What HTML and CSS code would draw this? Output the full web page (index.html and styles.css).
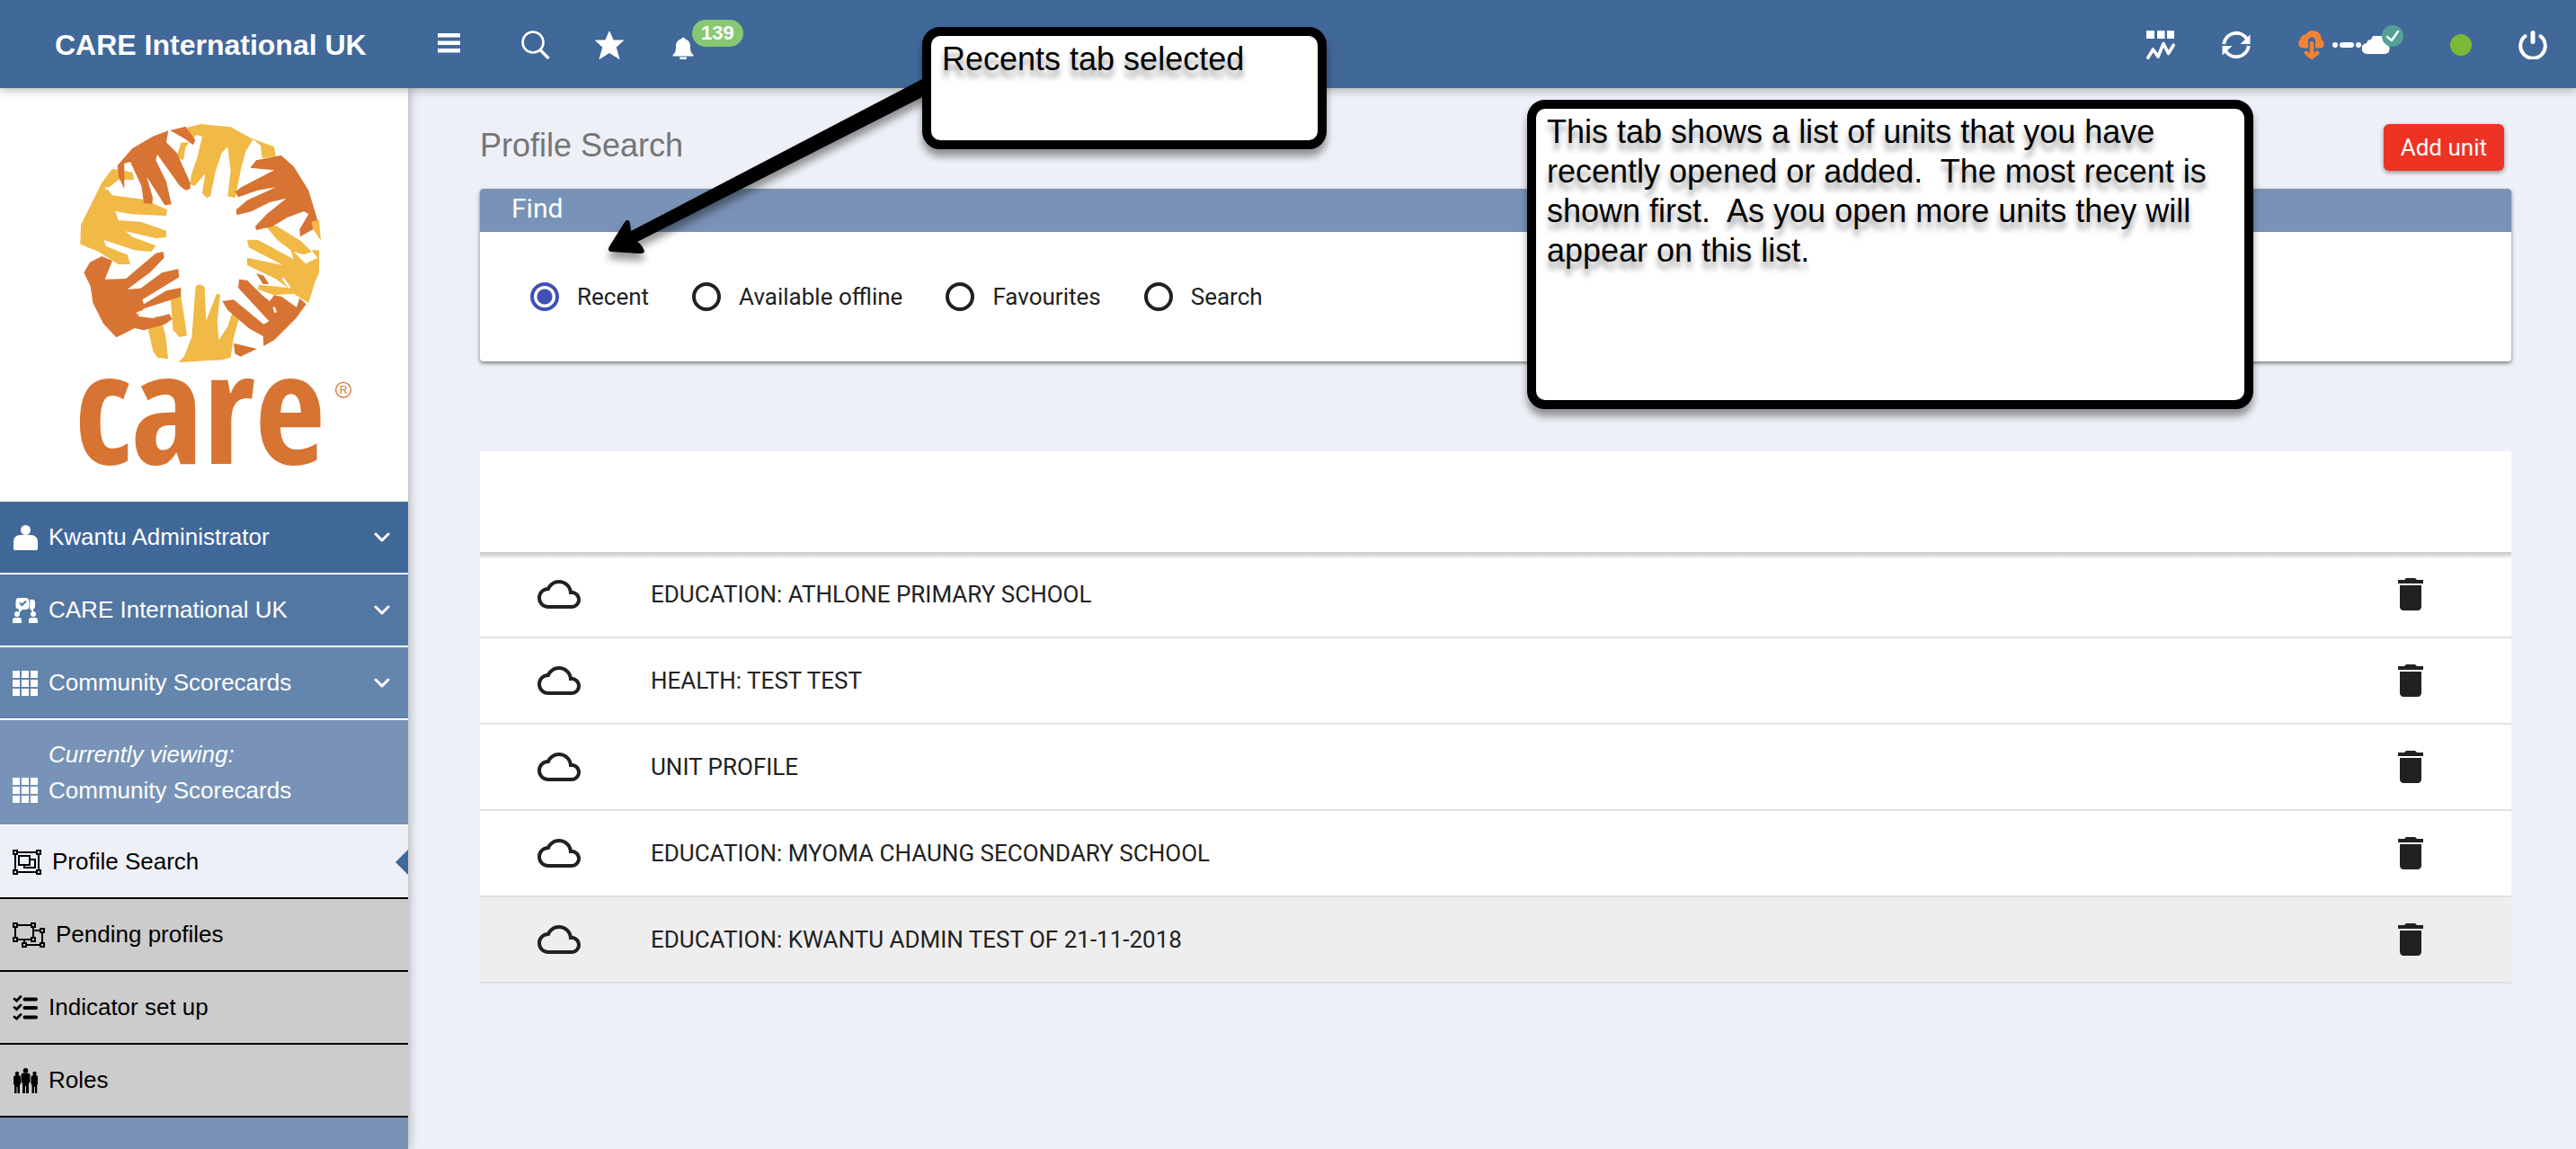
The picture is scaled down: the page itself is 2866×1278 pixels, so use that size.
FILE: index.html
```html
<!DOCTYPE html>
<html lang="en">

<head>
    <meta charset="UTF-8" />
    <meta name="viewport" content="width=device-width, initial-scale=1.0" />
    <title>Profile Search</title>
    <link rel="stylesheet" href="styles.css">
</head>

<body>
    <!-- shared icons -->
    <svg class="sprite" aria-hidden="true">
        <symbol id="icon-grid" viewBox="0 0 28 28">
            <path d="M0 0h8v8H0zM10 0h8v8h-8zM20 0h8v8h-8zM0 10h8v8H0zM10 10h8v8h-8zM20 10h8v8h-8zM0 20h8v8H0zM10 20h8v8h-8zM20 20h8v8h-8z" fill="currentColor" />
        </symbol>
        <symbol id="icon-chevron" viewBox="0 0 18 12">
            <path d="M2 2l7 7 7-7" fill="none" stroke="currentColor" stroke-width="3" stroke-linecap="round" stroke-linejoin="round" />
        </symbol>
        <symbol id="icon-cloud" viewBox="0 0 24 24">
            <path d="M19.35 10.04C18.67 6.59 15.64 4 12 4 9.11 4 6.6 5.64 5.35 8.04 2.34 8.36 0 10.91 0 14c0 3.31 2.69 6 6 6h13c2.76 0 5-2.24 5-5 0-2.64-2.05-4.78-4.65-4.96zM19 18H6c-2.21 0-4-1.79-4-4s1.79-4 4-4h.71C7.37 7.69 9.48 6 12 6c3.04 0 5.5 2.46 5.5 5.5v.5H19c1.66 0 3 1.34 3 3s-1.34 3-3 3z" fill="currentColor" />
        </symbol>
        <symbol id="icon-delete" viewBox="0 0 24 24">
            <path d="M6 19c0 1.100.9 2 2 2h8c1.100 0 2-.9 2-2V7H6v12zM19 4h-3.500l-1-1h-5l-1 1H5v2h14V4z" fill="currentColor" />
        </symbol>
        <symbol id="icon-solid-cloud" viewBox="0 0 32 20">
            <path d="M6 20a6 6 0 0 1-1-12 5 5 0 0 1 5-4A8.500 8.500 0 0 1 26.500 8.500 6 6 0 0 1 26 20z" fill="currentColor" />
        </symbol>
    </svg>

    <header class="topbar">
        <a class="brand" href="#">CARE International UK</a>
        <div class="tools">
            <button class="icon-btn menu-btn" aria-label="Menu">
                <svg viewBox="0 0 32 32"><path d="M4 3h25v4.500H4zM4 11.500h25V16H4zM4 20h25v4.500H4z" fill="currentColor" /></svg>
            </button>
            <button class="icon-btn" aria-label="Search">
                <svg viewBox="0 0 32 32" fill="none" stroke="currentColor"><circle cx="13" cy="13" r="11.500" stroke-width="2.600" /><path d="M21 21.500l9.500 9.500" stroke-width="3.400" /></svg>
            </button>
            <button class="icon-btn" aria-label="Favourites">
                <svg viewBox="0 0 32 32"><path d="M16 1l4.300 10H31.500l-8.300 7.600L27 31.500 16 24.500 5 31.500l3.800-12.900L.5 11h11.200z" fill="currentColor" stroke="currentColor" stroke-linejoin="round" /></svg>
            </button>
            <button class="icon-btn" aria-label="Notifications">
                <svg viewBox="0 0 32 32"><path d="M16 7.500c1 0 1.800.8 1.800 1.800 4 1 6.200 4 6.200 8.200 0 5 .8 7.500 3.500 9.500v1.500h-23V27C7.200 25 8 22.500 8 17.500c0-4.200 2.200-7.200 6.200-8.200 0-1 .8-1.800 1.800-1.800zM12 29.500h8a4 4 0 0 1-8 0z" fill="currentColor" /></svg>
                <span class="badge">139</span>
            </button>
        </div>
        <div class="status">
            <button class="icon-btn" aria-label="Reports">
                <svg viewBox="0 0 32 32"><path d="M0 0h9v9H0zM12 0h8.500v9H12zM23 0h8v9h-8z" fill="currentColor" /><path d="M1 31.500l6.500-10.500 5.500 8 6-14.500 5.500 11L31 15" fill="none" stroke="currentColor" stroke-width="3.600" stroke-linejoin="round" /></svg>
            </button>
            <button class="icon-btn" aria-label="Refresh">
                <svg viewBox="0 0 32 32"><path d="M2.200 15A14 14 0 0 1 28 9.500M29.800 17A14 14 0 0 1 4 22.500" fill="none" stroke="currentColor" stroke-width="4" /><path d="M31.500 4.500V15H20.500zM.5 27.500V17h11z" fill="currentColor" /></svg>
            </button>
            <div class="sync">
                <svg class="sync-down" viewBox="0 0 32 32"><path d="M6 19.500A5.500 5.500 0 0 1 3.500 9.500 5 5 0 0 1 9 4.500C14-3 25 0 26.500 7c.5 2-.2 2.500 1 3.500A5.300 5.300 0 0 1 27 19.500z" fill="#ee8336" /><path d="M16 11.500v17" fill="none" stroke="#406899" stroke-width="8" stroke-linecap="round" /><path d="M16 14v15M10 25l6 4.800 6-4.800" fill="none" stroke="#ee8336" stroke-width="4.600" stroke-linecap="round" stroke-linejoin="round" /></svg>
                <svg class="sync-link" viewBox="0 0 34 6"><circle cx="4" cy="3" r="3" fill="#fff" /><rect x="9" width="16" height="6" rx="3" fill="#fff" /><circle cx="30" cy="3" r="3" fill="#fff" /></svg>
                <svg class="sync-cloud"><use href="#icon-solid-cloud" /></svg>
                <svg class="sync-ok" viewBox="0 0 24 24"><circle cx="12" cy="12" r="12" fill="#52a096" /><path d="M6 13l5 4 7-10" fill="none" stroke="#fff" stroke-width="2.500" stroke-linecap="round" stroke-linejoin="round" /></svg>
            </div>
            <span class="online"></span>
            <button class="icon-btn" aria-label="Log out">
                <svg viewBox="0 0 32 32" fill="none" stroke="currentColor" stroke-width="4" stroke-linecap="round"><path d="M7.500 6.200a13.800 13.800 0 1 0 17 0" /><path d="M16 2.500v10" stroke-width="5" /></svg>
            </button>
        </div>
    </header>

    <div class="layout">
        <aside class="sidebar">
            <div class="logo">
                <svg viewBox="0 0 1080 1260" role="img" aria-label="care">
                    <!-- ring of hands -->
                    <g fill="#f1b945">
                        <path d="M445 65L490 54 590 64 655 100 735 130 740 162 695 168 690 125 665 105 640 145 625 200 605 300 580 295 590 210 580 130 560 150 540 210 522 295 510 300 495 285 505 220 470 260 455 255 458 225 480 160 495 95 475 90 440 130 432 175 408 165 425 115 465 118z" />
                        <path d="M195 203L262 215 268 240 215 240 178 270 195 292 300 305 378 340 375 360 260 355 205 345 215 375 290 380 375 410 375 432 340 435 240 412 260 430 340 460 325 480 270 475 165 440 175 462 245 490 255 522 215 522 150 480 88 455 90 390 125 320 160 250z" />
                        <path d="M700 385L745 395 825 445 860 480 835 490 800 480 840 520 880 500 860 475 885 475 885 550 872 580 850 650 800 620 735 625 680 605 685 590 780 600 740 570 645 525 645 500 740 520 765 525 650 465 645 440 680 440 800 505 790 475 745 440z" />
                        <path d="M865 375h20l6 68-35-52z" />
                        <path d="M390 640l34-10 10 60 10 70-25 5-22-25zM315 740l25-45 15 5 18 60 8 78-35-5-15-20zM473 595l14-6 16 8 5 113 35-90 12 3-10 90 5 62 30-45 15-45 25 10-20 70-10 68-30 8-145 8 20-20 25-65z" />
                    </g>
                    <g fill="#d77433">
                        <path d="M212 192L262 135 330 95 382 76 375 115 410 150 455 250 455 270 440 275 420 260 345 155 340 175 375 245 392 322 370 325 345 285 310 230 330 300 328 320 300 318 292 260 255 180 235 185 235 270 216 230z" />
                        <path d="M388 75L440 62 472 108 465 124 440 105z" />
                        <path d="M655 200L675 175 758 158 800 195 850 275 880 375 860 380 865 405 822 430 820 405 850 355 835 345 780 365 730 395 675 408 672 395 710 355 775 302 720 315 660 345 610 358 608 340 645 308 740 265 680 275 615 298 605 280 625 265 735 208z" />
                        <path d="M160 495L195 510 170 572 240 570 340 485 365 480 368 500 320 550 245 605 290 602 360 550 415 537 418 565 295 640 300 655 375 610 424 600 424 630 300 670 280 695 330 702 385 688 395 705 370 722 300 742 270 735 208 766 165 720 130 650 122 595 100 550 120 515z" />
                        <path d="M562 645L600 640 700 722 718 712 615 600 618 572 645 575 695 625 720 645 735 625 760 630 810 665 820 635 842 655 810 700 770 740 735 775 700 795 698 762 650 735 580 675z" />
                        <path d="M600 785L678 804 622 830 604 820zM675 552l25 8 18 28-20 0z" />
                    </g>
                    <!-- finger gaps -->
                    <path d="M280 685l105-35M175 268l70 15M765 570l20 28M735 668l4 12" stroke="#fff" stroke-width="8" stroke-linecap="round" />
                    <text class="logo-word" x="68" y="1187">care</text>
                    <circle cx="966" cy="941" r="25" fill="none" stroke="#d77433" stroke-width="4" />
                    <text class="logo-mark" x="966" y="954" text-anchor="middle">R</text>
                </svg>
            </div>

            <nav>
                <a class="nav-item level-1" href="#">
                    <svg class="nav-icon" viewBox="0 0 28 28"><circle cx="14.500" cy="5.500" r="5.500" fill="currentColor" /><path d="M1 26v-7c0-5 3-8 8-8h11c5 0 8 3 8 8v7c0 1.500-.5 2-2 2H3c-1.500 0-2-.5-2-2z" fill="currentColor" /></svg>
                    Kwantu Administrator
                    <svg class="chevron"><use href="#icon-chevron" /></svg>
                </a>
                <a class="nav-item level-2" href="#">
                    <svg class="nav-icon" viewBox="0 0 28 28"><path d="M7 0h7c3 0 4.500 1.500 4.500 4.500v4c0 3-1.500 4.500-4.500 4.500h-3l-4 4v-4.200C4.500 12.500 3.500 11 3.500 8.500v-4C3.500 1.500 4.500 0 7 0z" fill="currentColor" /><path d="M19.500 2c4-1 5.500.5 5.500 3v4c0 2-.5 3-2 3.500V16l-4-4z" fill="currentColor" /><path d="M8 5.500L10.500 8 15 3.500" fill="none" stroke="#5377a3" stroke-width="2" /><circle cx="5" cy="18" r="3" fill="currentColor" /><circle cx="23" cy="18" r="3" fill="currentColor" /><path d="M0 28v-3c0-2 1-3 3-3h4c2 0 3 1 3 3v3zM18 28v-3c0-2 1-3 3-3h4c2 0 3 1 3 3v3z" fill="currentColor" /></svg>
                    CARE International UK
                    <svg class="chevron"><use href="#icon-chevron" /></svg>
                </a>
                <a class="nav-item level-3" href="#">
                    <svg class="nav-icon"><use href="#icon-grid" /></svg>
                    Community Scorecards
                    <svg class="chevron"><use href="#icon-chevron" /></svg>
                </a>
                <div class="current">
                    <em>Currently viewing:</em>
                    <svg class="nav-icon"><use href="#icon-grid" /></svg>
                    <span>Community Scorecards</span>
                </div>
                <a class="nav-item page active" href="#">
                    <svg class="nav-icon wide" viewBox="0 0 32 28" fill="none" stroke="currentColor" stroke-width="2"><path d="M6 3h20M6 25h20M3 6v16M29 6v16M1 1h4v4H1zM27 1h4v4h-4zM1 23h4v4H1zM27 23h4v4h-4zM7 7h12v10H7zM19 11h6v9H13v-3" /></svg>
                    Profile Search
                </a>
                <a class="nav-item page" href="#">
                    <svg class="nav-icon wider" viewBox="0 0 36 28" fill="none" stroke="currentColor" stroke-width="2"><path d="M6 3h14M6 19h14M3 6v10M23 6v10M1 1h4v4H1zM21 1h4v4h-4zM1 17h4v4H1zM21 17h4v4h-4zM24 9h6M33 12v10M16 25h14M13 20v2M31 7h4v4h-4zM31 23h4v4h-4zM11 23h4v4h-4z" /></svg>
                    Pending profiles
                </a>
                <a class="nav-item page" href="#">
                    <svg class="nav-icon" viewBox="0 0 28 28" fill="none" stroke="currentColor" stroke-linecap="round"><path d="M13.500 4.500H26M13.500 14H26M13.500 24.500H26" stroke-width="4" /><path d="M2 4l2.500 2L9 1.500M2 13.500l2.500 2L9 11M2 24l2.500 2L9 21.500" stroke-width="2.800" /></svg>
                    Indicator set up
                </a>
                <a class="nav-item page" href="#">
                    <svg class="nav-icon" viewBox="0 0 28 28" fill="currentColor"><circle cx="14.500" cy="2.800" r="2.800" /><circle cx="5" cy="6" r="2.200" /><circle cx="24.500" cy="6" r="2.200" /><path d="M12 5.500h5c1.800 0 2.500 1 2.500 2.800V15c0 1-.8 1.500-1.500 1.500V28h-3v-8h-1v8h-3V16.500c-.8 0-1.500-.5-1.500-1.500V8.300c0-1.800.7-2.800 2.500-2.800zM3.500 8h3C8 8 9 9 9 10.500V17c0 1-.5 1.500-1 1.500V28H5.500v-7h-1v7H2v-9.500c-.5 0-1-.5-1-1.500v-6.500C1 9 2 8 3.500 8zM23 8h3c1.300 0 2 1 2 2.500V17c0 1-.3 1.500-.8 1.500V28H25v-7h-1v7h-2.500v-9.500c-.7 0-1-.5-1-1.500v-6.500C20.500 9 21.500 8 23 8z" /></svg>
                    Roles
                </a>
            </nav>
        </aside>

        <main class="content">
            <div class="title-row">
                <h1>Profile Search</h1>
                <button class="add-btn">Add unit</button>
            </div>

            <section class="panel">
                <h2>Find</h2>
                <form class="filters">
                    <label><input type="radio" name="filter" checked>Recent</label>
                    <label><input type="radio" name="filter">Available offline</label>
                    <label><input type="radio" name="filter">Favourites</label>
                    <label><input type="radio" name="filter">Search</label>
                </form>
            </section>

            <table class="units">
                <thead>
                    <tr><th></th><th></th><th></th></tr>
                </thead>
                <tbody>
                    <tr>
                        <td><svg><use href="#icon-cloud" /></svg></td>
                        <td>EDUCATION: ATHLONE PRIMARY SCHOOL</td>
                        <td><button aria-label="Delete"><svg><use href="#icon-delete" /></svg></button></td>
                    </tr>
                    <tr>
                        <td><svg><use href="#icon-cloud" /></svg></td>
                        <td>HEALTH: TEST TEST</td>
                        <td><button aria-label="Delete"><svg><use href="#icon-delete" /></svg></button></td>
                    </tr>
                    <tr>
                        <td><svg><use href="#icon-cloud" /></svg></td>
                        <td>UNIT PROFILE</td>
                        <td><button aria-label="Delete"><svg><use href="#icon-delete" /></svg></button></td>
                    </tr>
                    <tr>
                        <td><svg><use href="#icon-cloud" /></svg></td>
                        <td>EDUCATION: MYOMA CHAUNG SECONDARY SCHOOL</td>
                        <td><button aria-label="Delete"><svg><use href="#icon-delete" /></svg></button></td>
                    </tr>
                    <tr class="hovered">
                        <td><svg><use href="#icon-cloud" /></svg></td>
                        <td>EDUCATION: KWANTU ADMIN TEST OF 21-11-2018</td>
                        <td><button aria-label="Delete"><svg><use href="#icon-delete" /></svg></button></td>
                    </tr>
                </tbody>
            </table>
        </main>
    </div>

    <!-- help notes -->
    <svg class="arrow" viewBox="0 0 380 210"><path d="M368 0L42 170 41 161Q39 155 35 160L18 187Q15 193 21 193L52 195Q59 195 56 190 53 184 49 182L372 18z" /></svg>
    <div class="note note-tab">Recents tab selected</div>
    <div class="note note-list">This tab shows a list of units that you have
recently opened or added.  The most recent is
shown first.  As you open more units they will
appear on this list.</div>
</body>

</html>
```

FILE: styles.css
```css
* {
    box-sizing: border-box;
}

body {
    position: relative;
    min-height: 100vh;
    margin: 0;
    display: flex;
    flex-direction: column;
    font-family: 'Liberation Sans', Arial, sans-serif;
    font-size: 26px;
    background-color: #edf0f6;
    color: #212121;
}

a {
    color: inherit;
    text-decoration: none;
}

button {
    padding: 0;
    border: none;
    background: none;
    color: inherit;
    font: inherit;
    cursor: pointer;
}

svg {
    display: block;
    flex: none;
}

.sprite {
    position: absolute;
    width: 0;
    height: 0;
}

/* top bar */
.topbar {
    position: relative;
    z-index: 2;
    display: flex;
    align-items: center;
    height: 98px;
    padding: 2px 32px 0 0;
    background-color: #406899;
    color: #fff;
    box-shadow: 0 2px 10px rgba(0, 0, 0, 0.3);
}

.brand {
    width: 483px;
    padding-left: 61px;
    font-size: 32px;
    font-weight: bold;
}

.tools {
    display: flex;
    align-items: center;
    gap: 50px;
}

.menu-btn {
    margin-right: 15px;
}

.icon-btn {
    position: relative;
    width: 32px;
    height: 32px;
}

.icon-btn svg {
    width: 32px;
    height: 32px;
}

.badge {
    position: absolute;
    top: -12px;
    left: 26px;
    padding: 0 10px;
    border-radius: 15px;
    background-color: #88c872;
    font-size: 22px;
    font-weight: bold;
    line-height: 30px;
}

.status {
    display: flex;
    align-items: center;
    gap: 52px;
    margin-left: auto;
}

.sync {
    position: relative;
    display: flex;
    align-items: center;
    gap: 6px;
    width: 118px;
}

.sync-down {
    width: 32px;
    height: 32px;
}

.sync-link {
    width: 34px;
    height: 6px;
}

.sync-cloud {
    width: 32px;
    height: 20px;
    margin-left: -6px;
}

.sync-ok {
    position: absolute;
    top: -6px;
    right: 0;
    width: 24px;
    height: 24px;
}

.online {
    width: 24px;
    height: 24px;
    border-radius: 50%;
    background-color: #7cb937;
}

/* side menu */
.layout {
    display: flex;
    flex: 1;
}

.sidebar {
    width: 454px;
    flex: none;
    background-color: #7893b7;
    box-shadow: 2px 0 10px rgba(0, 0, 0, 0.25);
}

.logo {
    padding: 22px 34px 18px 60px;
    background-color: #fff;
}

.logo svg {
    width: 360px;
    height: 420px;
    overflow: visible;
}

.logo-word {
    font-family: 'Open Sans Condensed', 'Roboto Condensed', 'Liberation Sans Narrow', 'Lato', sans-serif;
    font-size: 512px;
    font-weight: bold;
    fill: #d77433;
}

.logo-mark {
    font-size: 36px;
    fill: #d77433;
}

.nav-item {
    position: relative;
    display: flex;
    align-items: center;
    gap: 12px;
    height: 81px;
    padding: 0 20px 0 14px;
    border-bottom: 2px solid #fff;
    color: #fff;
}

.level-1 {
    background-color: #406899;
}

.level-2 {
    background-color: #5377a3;
}

.level-3 {
    background-color: #6485ac;
}

.nav-icon {
    width: 28px;
    height: 28px;
}

.nav-icon.wide {
    width: 32px;
}

.nav-icon.wider {
    width: 36px;
}

.chevron {
    width: 18px;
    height: 12px;
    margin-left: auto;
}

.current {
    display: grid;
    grid-template-columns: 28px 1fr;
    column-gap: 12px;
    align-items: center;
    padding: 18px 14px;
    border-bottom: 2px solid #fff;
    line-height: 40px;
    color: #fff;
}

.current em {
    grid-column: 2;
}

.page {
    background-color: #ccc;
    border-color: #000;
    color: #000;
}

.page.active {
    background-color: #edf0f6;
}

.active::after {
    content: '';
    position: absolute;
    top: 26px;
    right: 0;
    border: 14px solid transparent;
    border-right-color: #406899;
    border-left: none;
}

/* content */
.content {
    flex: 1;
    padding: 40px 72px 40px 80px;
    font-family: Roboto, sans-serif;
}

.title-row {
    display: flex;
    justify-content: space-between;
    align-items: flex-start;
    margin-bottom: 20px;
}

h1 {
    margin: 0;
    font-family: 'Liberation Sans', Arial, sans-serif;
    font-size: 36px;
    font-weight: normal;
    line-height: 48px;
    color: #757575;
}

.add-btn {
    height: 52px;
    margin-right: 8px;
    padding: 0 19px;
    border-radius: 6px;
    background-color: #ed3324;
    color: #fff;
    box-shadow: 0 2px 5px rgba(0, 0, 0, 0.4);
}

.panel {
    margin-bottom: 100px;
    border-radius: 4px;
    background-color: #fff;
    box-shadow: 0 2px 4px rgba(0, 0, 0, 0.5);
}

.panel h2 {
    height: 48px;
    margin: 0;
    padding: 0 35px;
    border-radius: 4px 4px 0 0;
    background-color: #7893b7;
    color: #fff;
    font-size: 30px;
    font-weight: normal;
    line-height: 44px;
}

.filters {
    display: flex;
    gap: 48px;
    padding: 56px;
}

.filters label {
    display: flex;
    align-items: center;
    gap: 20px;
    line-height: 32px;
}

.filters input {
    appearance: none;
    width: 32px;
    height: 32px;
    margin: 0;
    border: 4px solid #212121;
    border-radius: 50%;
}

.filters input:checked {
    border-color: #3f51b5;
    background: radial-gradient(circle, #3f51b5 8px, transparent 9px);
}

.units {
    width: 100%;
    table-layout: fixed;
    border-spacing: 0;
    background-color: #fff;
}

.units th {
    height: 112px;
}

.units th:first-child {
    width: 190px;
}

.units th:last-child {
    width: 200px;
}

.units td {
    height: 96px;
    padding: 0;
    border-bottom: 2px solid #e1e1e1;
}

/* shadow of the header row */
.units tbody tr:first-child td {
    background: linear-gradient(#c8c8c8, #e0e0e0 4px, #fff 8px);
}

.units td:first-child,
.units td:last-child {
    padding-left: 64px;
}

.units button {
    display: block;
}

.units svg {
    width: 48px;
    height: 48px;
}

.units .hovered {
    background-color: #eee;
}

/* help notes */
.arrow {
    position: absolute;
    z-index: 3;
    top: 87px;
    left: 660px;
    width: 380px;
    height: 210px;
    filter: drop-shadow(0 8px 4px rgba(0, 0, 0, 0.4));
}

.note {
    position: absolute;
    z-index: 3;
    padding: 4px 12px;
    border: 10px solid #000;
    border-radius: 20px;
    background-color: #fff;
    color: #000;
    font-size: 36px;
    line-height: 44px;
    white-space: pre;
    text-shadow: 0 8px 6px rgba(0, 0, 0, 0.4);
    box-shadow: 0 8px 8px rgba(0, 0, 0, 0.4);
}

.note-tab {
    top: 30px;
    left: 1026px;
    width: 450px;
    height: 136px;
}

.note-list {
    top: 111px;
    left: 1699px;
    width: 808px;
    height: 344px;
}
```
